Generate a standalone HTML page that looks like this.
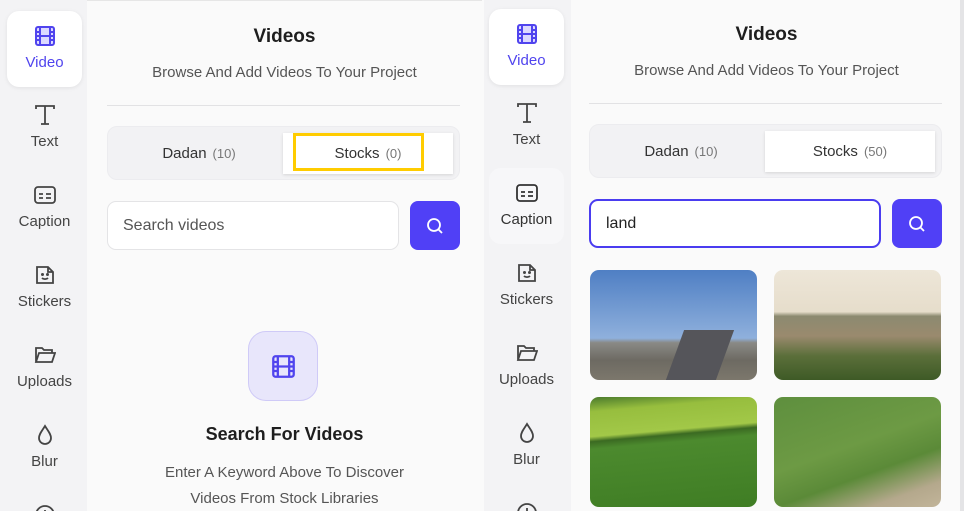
<!DOCTYPE html>
<html><head><meta charset="utf-8"><style>
*{box-sizing:border-box;margin:0;padding:0}
html,body{width:964px;height:511px;overflow:hidden}
body{background:#fafafa;font-family:"Liberation Sans",sans-serif;position:relative}
.panel{position:absolute;top:0;height:511px;width:482px;overflow:hidden;background:#fafafa}
.inner{position:absolute;left:0;top:0;width:482px;height:511px}
.sb{position:absolute;left:0;top:0;width:87px;height:520px;background:#f3f3f5}
.it{position:absolute;left:7px;width:75px;height:76px;text-align:center;color:#444;font-size:15px;border-radius:12px;overflow:hidden}
.it svg{display:block;margin:14px auto 0}
.it span{display:block;margin-top:7px}
.act{background:#fff;box-shadow:0 1px 4px rgba(0,0,0,.08);color:#5044ee}
.abs{position:absolute}
.title{left:87px;width:395px;text-align:center;font-weight:bold;font-size:19px;color:#1e1e1e}
.sub{left:87px;width:395px;text-align:center;font-size:15px;color:#555}
.hr{left:107px;width:353px;height:1px;background:#e2e2e4}
.tabs{left:107px;width:353px;height:54px;border:1px solid #ececef;background:#f2f2f4;border-radius:10px}
.tab{position:absolute;top:6px;height:41px;width:170px;text-align:center;line-height:41px;font-size:15px;color:#333}
.tab i{font-style:normal;color:#777;font-size:13px;margin-left:6px}
.tab.on{background:#fff;box-shadow:0 1px 3px rgba(0,0,0,.12)}
.inp{left:107px;width:292px;height:49px;background:#fff;border:1px solid #e4e4e6;border-radius:9px;font-size:16px;color:#555;padding-left:15px;line-height:47px}
.btn{left:410px;width:50px;height:49px;background:#5040f6;border-radius:8px}
.btn svg{display:block;margin:16px auto}
.th{width:167px;height:110px;border-radius:9px;overflow:hidden}
</style></head><body>

<!-- LEFT PANEL -->
<div class="panel" style="left:0">
 <div class="abs" style="left:0;top:0;width:482px;height:1px;background:#e6e6e6"></div>
 <div class="sb"></div>
 <div class="it act" style="top:11px"><svg width="22" height="22" viewBox="0 0 22 22" fill="none" stroke="#5044ee" stroke-width="2"><rect x="2" y="2" width="18" height="18" rx="2" fill="#dcd9ff"/><path d="M6 2v18M16 2v18M2 7h4M2 11h4M2 15h4M16 7h4M16 11h4M16 15h4M6 11h10"/></svg><span>Video</span></div>
 <div class="it" style="top:90px"><svg width="22" height="22" viewBox="0 0 22 22" fill="none" stroke="#444" stroke-width="1.8"><path d="M2 5V2h18v3M11 2v18M7 20h8"/></svg><span>Text</span></div>
 <div class="it" style="top:170px"><svg width="22" height="22" viewBox="0 0 22 22" fill="none" stroke="#444" stroke-width="1.8"><rect x="1" y="3" width="20" height="16" rx="3"/><path d="M5 10h4M12 10h5M5 14h4M12 14h5"/></svg><span>Caption</span></div>
 <div class="it" style="top:250px"><svg width="22" height="22" viewBox="0 0 22 22" fill="none" stroke="#444" stroke-width="1.8"><path d="M3 3h11l5 5v11H3z M14 3v5h5"/><path d="M8 14c1.5 1.5 4.5 1.5 6 0"/><circle cx="8.5" cy="10.5" r=".6" fill="#444"/><circle cx="13.5" cy="10.5" r=".6" fill="#444"/></svg><span>Stickers</span></div>
 <div class="it" style="top:330px"><svg width="22" height="22" viewBox="0 0 22 22" fill="none" stroke="#444" stroke-width="1.8"><path d="M2 18V4h6l2 2h8v3M2 18l3-9h16l-3 9z"/></svg><span>Uploads</span></div>
 <div class="it" style="top:410px"><svg width="22" height="22" viewBox="0 0 22 22" fill="none" stroke="#444" stroke-width="1.8"><path d="M11 2C8 7 5 10 5 14a6 6 0 0 0 12 0c0-4-3-7-6-12z"/></svg><span>Blur</span></div>
 <div class="it" style="top:490px;height:21px"><svg width="22" height="22" viewBox="0 0 22 22" fill="none" stroke="#444" stroke-width="1.8"><circle cx="11" cy="11" r="9"/><path d="M11 6v5"/></svg></div>

 <div class="abs title" style="top:26px">Videos</div>
 <div class="abs sub" style="top:64px">Browse And Add Videos To Your Project</div>
 <div class="abs hr" style="top:105px"></div>
 <div class="abs tabs" style="top:126px">
  <div class="tab" style="left:6px">Dadan<i>(10)</i></div>
  <div class="tab on" style="left:175px">Stocks<i>(0)</i></div>
 </div>
 <div class="abs" style="left:293px;top:133px;width:131px;height:38px;border:3px solid #ffcc00"></div>
 <div class="abs inp" style="top:201px">Search videos</div>
 <div class="abs btn" style="top:201px"><svg width="18" height="18" viewBox="0 0 18 18" fill="none" stroke="#fff" stroke-width="1.8"><circle cx="8" cy="8" r="6"/><path d="M12.5 12.5L16 16"/></svg></div>

 <div class="abs" style="left:248px;top:331px;width:70px;height:70px;background:#e8e6fb;border:1px solid #cfcaf7;border-radius:18px"><svg style="display:block;margin:22px auto" width="25" height="25" viewBox="0 0 22 22" fill="none" stroke="#5044ee" stroke-width="2"><rect x="2" y="2" width="18" height="18" rx="2"/><path d="M6 2v18M16 2v18M2 7h4M2 11h4M2 15h4M16 7h4M16 11h4M16 15h4M6 11h10"/></svg></div>
 <div class="abs" style="left:87px;width:395px;top:424px;text-align:center;font-weight:bold;font-size:18px;color:#1e1e1e">Search For Videos</div>
 <div class="abs" style="left:87px;width:395px;top:460px;text-align:center;font-size:15px;color:#555;line-height:26px">Enter A Keyword Above To Discover<br>Videos From Stock Libraries</div>
</div>
<div class="abs" style="left:482px;top:0;width:2px;height:511px;background:#ececee"></div>

<!-- RIGHT PANEL -->
<div class="panel" style="left:482px">
<div class="inner" style="top:-2px">
 <div class="sb" style="left:2px"></div>
 <div class="it act" style="top:11px;left:7px"><svg width="22" height="22" viewBox="0 0 22 22" fill="none" stroke="#5044ee" stroke-width="2"><rect x="2" y="2" width="18" height="18" rx="2" fill="#dcd9ff"/><path d="M6 2v18M16 2v18M2 7h4M2 11h4M2 15h4M16 7h4M16 11h4M16 15h4M6 11h10"/></svg><span>Video</span></div>
 <div class="it" style="top:90px"><svg width="22" height="22" viewBox="0 0 22 22" fill="none" stroke="#444" stroke-width="1.8"><path d="M2 5V2h18v3M11 2v18M7 20h8"/></svg><span>Text</span></div>
 <div class="it" style="top:170px;background:#f7f7f9;color:#333"><svg width="22" height="22" viewBox="0 0 22 22" fill="none" stroke="#333" stroke-width="1.8"><rect x="1" y="3" width="20" height="16" rx="3"/><path d="M5 10h4M12 10h5M5 14h4M12 14h5"/></svg><span>Caption</span></div>
 <div class="it" style="top:250px"><svg width="22" height="22" viewBox="0 0 22 22" fill="none" stroke="#444" stroke-width="1.8"><path d="M3 3h11l5 5v11H3z M14 3v5h5"/><path d="M8 14c1.5 1.5 4.5 1.5 6 0"/><circle cx="8.5" cy="10.5" r=".6" fill="#444"/><circle cx="13.5" cy="10.5" r=".6" fill="#444"/></svg><span>Stickers</span></div>
 <div class="it" style="top:330px"><svg width="22" height="22" viewBox="0 0 22 22" fill="none" stroke="#444" stroke-width="1.8"><path d="M2 18V4h6l2 2h8v3M2 18l3-9h16l-3 9z"/></svg><span>Uploads</span></div>
 <div class="it" style="top:410px"><svg width="22" height="22" viewBox="0 0 22 22" fill="none" stroke="#444" stroke-width="1.8"><path d="M11 2C8 7 5 10 5 14a6 6 0 0 0 12 0c0-4-3-7-6-12z"/></svg><span>Blur</span></div>
 <div class="it" style="top:490px;height:23px"><svg width="22" height="22" viewBox="0 0 22 22" fill="none" stroke="#444" stroke-width="1.8"><circle cx="11" cy="11" r="9"/><path d="M11 6v5"/></svg></div>

 <div class="abs title" style="top:26px">Videos</div>
 <div class="abs sub" style="top:64px">Browse And Add Videos To Your Project</div>
 <div class="abs hr" style="top:105px"></div>
 <div class="abs tabs" style="top:126px">
  <div class="tab" style="left:6px">Dadan<i>(10)</i></div>
  <div class="tab on" style="left:175px">Stocks<i>(50)</i></div>
 </div>
 <div class="abs inp" style="top:201px;border:2px solid #4a3cf0;color:#222;line-height:45px">land</div>
 <div class="abs btn" style="top:201px"><svg width="18" height="18" viewBox="0 0 18 18" fill="none" stroke="#fff" stroke-width="1.8"><circle cx="8" cy="8" r="6"/><path d="M12.5 12.5L16 16"/></svg></div>

 <div class="abs th" style="left:108px;top:272px;background:linear-gradient(180deg,#4f7fc4 0%,#8fb0dc 62%,#8a8a86 66%,#6d6a62 82%,#7c776c 100%)"><div style="position:absolute;left:85px;top:60px;width:50px;height:50px;background:#55555a;transform:skewX(-20deg)"></div></div>
 <div class="abs th" style="left:292px;top:272px;background:linear-gradient(180deg,#ede6d8 0%,#e6ddcb 38%,#8c8a70 42%,#9a8a6e 60%,#5b6f3a 78%,#3e5a26 100%)"></div>
 <div class="abs th" style="left:108px;top:399px;background:linear-gradient(175deg,#4a7a2c 0%,#97be3e 12%,#a2c848 32%,#3b6a22 36%,#4c8a2e 42%,#3f7d24 100%)"></div>
 <div class="abs th" style="left:292px;top:399px;background:linear-gradient(160deg,#5e8f3e 0%,#6d9a44 45%,#5b8a38 65%,#b4a88c 85%,#c2b59a 100%)"></div>
</div>
</div>
<div class="abs" style="left:960px;top:0;width:4px;height:511px;background:#e4e4e6"></div>
</body></html>
